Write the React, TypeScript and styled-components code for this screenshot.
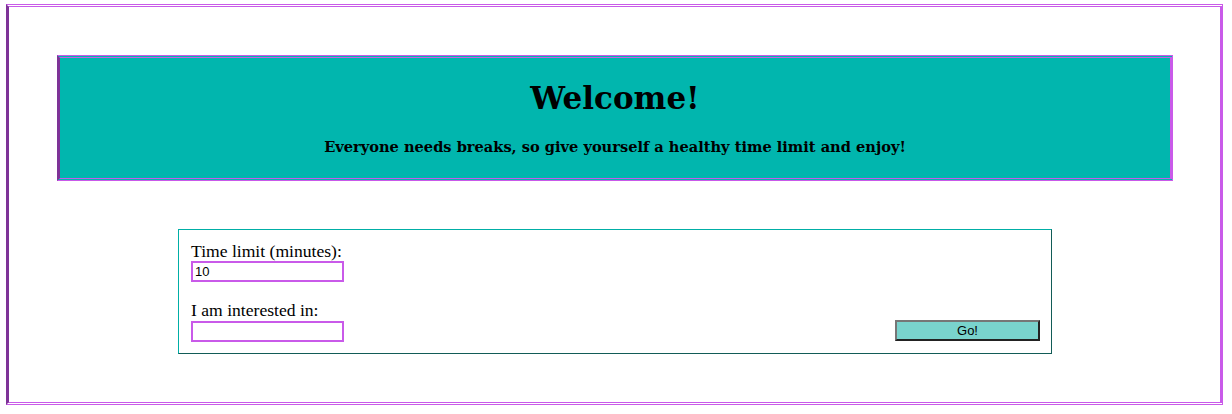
import React from "react";
import styled, { createGlobalStyle } from "styled-components";

const GlobalStyle = createGlobalStyle`
  html, body { margin: 0; padding: 0; background: #ffffff; }
  body { font-family: "Liberation Serif", "DejaVu Serif", serif; color: #000; }
  * { box-sizing: border-box; }
`;

const Page = styled.div`
  padding: 4px 9px 9px 6px;
`;

const Frame = styled.div`
  border-top: 3px double #c95ae9;
  border-bottom: 3px double #c95ae9;
  border-right: 3px solid #c95ae9;
  border-left: 3px solid #7e3397;
  padding: 48px 47px 48px 48px;
  display: flex;
  flex-direction: column;
  gap: 48px;
`;

const Banner = styled.header`
  background: #01b6ae;
  border-top: 3px double #c95ae9;
  border-bottom: 3px double #c95ae9;
  border-right: 3px solid #c95ae9;
  border-left: 3px solid #7e3397;
  height: 126px;
  padding-top: 20px;
  text-align: center;
`;

const Title = styled.h1`
  margin: 0;
  font-family: "DejaVu Serif", serif;
  font-weight: bold;
  font-size: 31px;
  line-height: 40px;
`;

const Subtitle = styled.p`
  margin: 19px 0 0;
  font-family: "DejaVu Serif", serif;
  font-weight: bold;
  font-size: 14.6px;
  line-height: 20px;
`;

const FormBox = styled.form`
  width: 874px;
  margin: 0 auto;
  border-top: 1px solid #00aea6;
  border-left: 1px solid #00aea6;
  border-right: 1px solid #125c57;
  border-bottom: 1px solid #125c57;
  padding: 12px 11px 11px 12px;
  display: flex;
  justify-content: space-between;
  align-items: flex-end;
`;

const Fields = styled.div`
  display: flex;
  flex-direction: column;
`;

const Label = styled.label<{ $gap?: number }>`
  display: block;
  font-size: 17.6px;
  line-height: 18px;
  margin-top: ${(p) => p.$gap ?? 0}px;
`;

const TextInput = styled.input<{ $top?: number }>`
  display: block;
  width: 153px;
  height: 21px;
  margin-top: ${(p) => p.$top ?? 1}px;
  border: 2px solid #c95ae9;
  padding: 0 2px;
  font-family: "Liberation Sans", Arial, sans-serif;
  font-size: 13px;
  color: #000;
  background: #fff;
  outline: none;
`;

const GoButton = styled.button`
  width: 145px;
  height: 21px;
  margin-bottom: 1px;
  background: #79d3cd;
  border-style: solid;
  border-width: 2px;
  border-color: #767676 #222222 #222222 #767676;
  font-family: "Liberation Sans", Arial, sans-serif;
  font-size: 13px;
  color: #000;
  padding: 0;
  line-height: 17px;
`;

export default function App() {
  return (
    <>
      <GlobalStyle />
      <Page>
        <Frame>
          <Banner>
            <Title>Welcome!</Title>
            <Subtitle>
              Everyone needs breaks, so give yourself a healthy time limit and enjoy!
            </Subtitle>
          </Banner>
          <FormBox onSubmit={(e) => e.preventDefault()}>
            <Fields>
              <Label htmlFor="limit">Time limit (minutes):</Label>
              <TextInput id="limit" type="text" defaultValue="10" />
              <Label htmlFor="interest" $gap={19}>
                I am interested in:
              </Label>
              <TextInput id="interest" type="text" $top={2} />
            </Fields>
            <GoButton type="submit">Go!</GoButton>
          </FormBox>
        </Frame>
      </Page>
    </>
  );
}
